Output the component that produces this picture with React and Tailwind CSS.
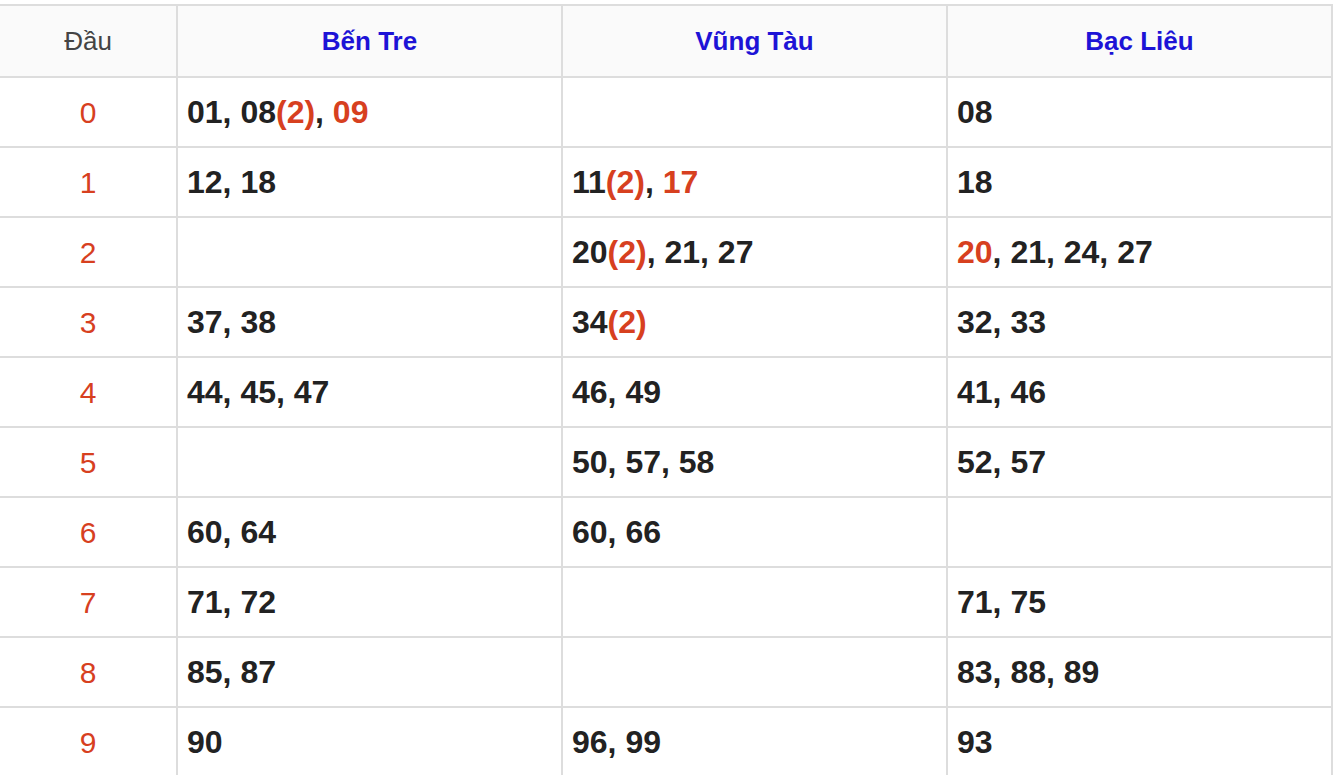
import React from "react";

const rows = [
  { d: "0", c: [[["01, 08"], ["(2)", 1], [", "], ["09", 1]], [], [["08"]]] },
  { d: "1", c: [[["12, 18"]], [["11"], ["(2)", 1], [", "], ["17", 1]], [["18"]]] },
  { d: "2", c: [[], [["20"], ["(2)", 1], [", 21, 27"]], [["20", 1], [", 21, 24, 27"]]] },
  { d: "3", c: [[["37, 38"]], [["34"], ["(2)", 1]], [["32, 33"]]] },
  { d: "4", c: [[["44, 45, 47"]], [["46, 49"]], [["41, 46"]]] },
  { d: "5", c: [[], [["50, 57, 58"]], [["52, 57"]]] },
  { d: "6", c: [[["60, 64"]], [["60, 66"]], []] },
  { d: "7", c: [[["71, 72"]], [], [["71, 75"]]] },
  { d: "8", c: [[["85, 87"]], [], [["83, 88, 89"]]] },
  { d: "9", c: [[["90"]], [["96, 99"]], [["93"]]] },
];

export default function App() {
  return (
    <div
      className="bg-white w-[1339px] h-[775px] overflow-hidden pt-[4px]"
      style={{ fontFamily: '"Liberation Sans", Arial, sans-serif' }}
    >
      <div className="w-[1333px] border-t-2 border-[#dddddd]">
        <div className="flex h-[72px] bg-[#fafafa] border-b-2 border-[#dddddd]">
          <div className="w-[178px] shrink-0 border-r-2 border-[#dddddd] flex items-center justify-center text-[26px] text-[#444444]">
            Đầu
          </div>
          {["Bến Tre", "Vũng Tàu", "Bạc Liêu"].map((h) => (
            <div
              key={h}
              className="w-[385px] shrink-0 border-r-2 border-[#dddddd] flex items-center justify-center text-[26px] font-bold text-[#1d13d6]"
            >
              {h}
            </div>
          ))}
        </div>
        {rows.map((r) => (
          <div key={r.d} className="flex h-[70px] border-b-2 border-[#dddddd]">
            <div className="w-[178px] shrink-0 border-r-2 border-[#dddddd] flex items-center justify-center text-[30px] text-[#d7401f]">
              {r.d}
            </div>
            {r.c.map((cell, i) => (
              <div
                key={i}
                className="w-[385px] shrink-0 border-r-2 border-[#dddddd] flex items-center pl-[9px] text-[32px] font-bold text-[#222222]"
              >
                <span>
                  {cell.map(([t, red], j) => (
                    <span key={j} className={red ? "text-[#d7401f]" : ""}>
                      {t}
                    </span>
                  ))}
                </span>
              </div>
            ))}
          </div>
        ))}
      </div>
    </div>
  );
}
